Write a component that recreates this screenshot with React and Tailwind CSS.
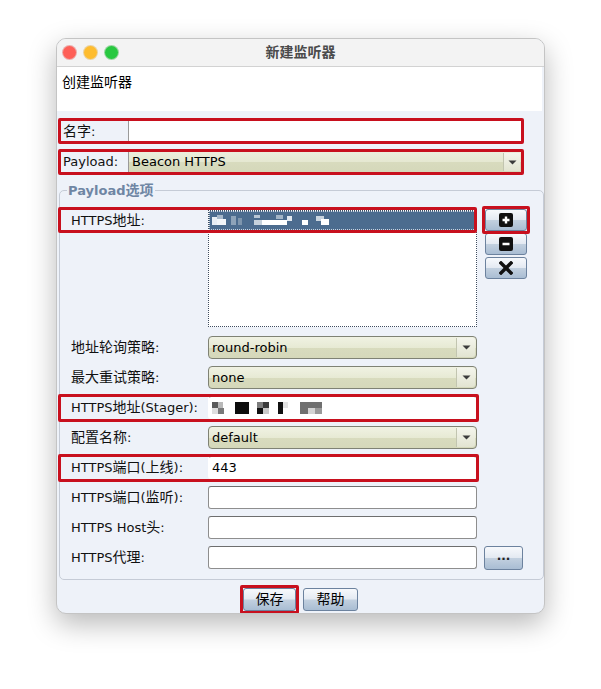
import React from 'react'

const RED = 'border-[#c8101e]'

// CJK glyphs sit a little larger than the Latin ones in the original Swing UI
function T({ children }) {
  const parts = String(children).split(/([\u3400-\u9fff]+)/)
  return (
    <>
      {parts.map((p, i) =>
        /[\u3400-\u9fff]/.test(p) ? <span key={i} className="text-[14px]">{p}</span> : p
      )}
    </>
  )
}

function Red({ className }) {
  return <span className={`pointer-events-none absolute border-[3px] ${RED} rounded-[2px] ${className}`} />
}

function Arrow() {
  return (
    <svg width="9" height="5" viewBox="0 0 9 5">
      <path d="M0.5 0.5 H8.5 L4.5 4.5 Z" fill="#3b3b3b" />
    </svg>
  )
}

function Combo({ value, className = '' }) {
  return (
    <div className={`flex h-full rounded-[4px] border border-[#7f8274] bg-[linear-gradient(#f0f2e3_0%,#e7ead4_50%,#d8dbbe_52%,#d5d8ba_100%)] ${className}`}>
      <span className="flex-1 pl-[3px] leading-[21px] text-black">{value}</span>
      <span className="my-[1px] mr-[1px] flex w-[19px] items-center justify-center rounded-r-[3px] border-l border-[#c2c5b0] bg-[linear-gradient(#f4f5ec,#e2e4d1)]">
        <Arrow />
      </span>
    </div>
  )
}

function Field({ children, className = '' }) {
  return (
    <div className={`flex h-full items-center rounded-[3px] border border-[#8e8e8e] border-t-[#6e6e6e] bg-white pl-[3px] ${className}`}>
      {children}
    </div>
  )
}

function AquaButton({ children, className = '' }) {
  return (
    <div className={`flex items-center justify-center rounded-[3px] border border-[#6c829e] bg-[linear-gradient(#f7f9fc_0%,#e4eaf2_48%,#c2d0df_52%,#a9bdd3_100%)] ${className}`}>
      {children}
    </div>
  )
}

function Row({ label, children, red, extra }) {
  return (
    <div className="relative flex h-[23px] items-center">
      <span className="w-[137px] whitespace-nowrap text-[#111]"><T>{label}</T></span>
      <div className="h-full w-[269px]">{children}</div>
      {extra}
      {red && <Red className="-left-[13px] -top-[2px] -bottom-[3px] w-[421px]" />}
    </div>
  )
}

function PlusIcon() {
  return (
    <svg width="14" height="14" viewBox="0 0 14 14">
      <rect x="0" y="0" width="14" height="14" rx="2" fill="#111" />
      <path d="M7 3.5 V10.5 M3.5 7 H10.5" stroke="#fff" strokeWidth="2.4" />
    </svg>
  )
}

function MinusIcon() {
  return (
    <svg width="14" height="14" viewBox="0 0 14 14">
      <rect x="0" y="0" width="14" height="14" rx="2" fill="#111" />
      <path d="M3.5 7 H10.5" stroke="#fff" strokeWidth="2.4" />
    </svg>
  )
}

function CrossIcon() {
  return (
    <svg width="14" height="14" viewBox="0 0 14 14">
      <path d="M2 2 L12 12 M12 2 L2 12" stroke="#111" strokeWidth="3.4" strokeLinecap="square" />
    </svg>
  )
}

// blurred address in the list
function BlurAddr() {
  return (
    <svg width="125" height="14" viewBox="0 0 125 14">
      <rect x="0" y="3" width="5" height="8" fill="#e9eef4" />
      <rect x="5" y="1" width="6" height="4" fill="#a7b8ca" />
      <rect x="5" y="5" width="9" height="6" fill="#f3f6f9" />
      <rect x="19" y="2" width="5" height="9" fill="#8ea3b9" />
      <rect x="26" y="4" width="4" height="7" fill="#7e95ad" />
      <rect x="42" y="1" width="6" height="3" fill="#b7c5d3" />
      <rect x="42" y="6" width="8" height="5" fill="#c6d1dc" />
      <rect x="50" y="6" width="25" height="5" fill="#ffffff" />
      <rect x="64" y="1" width="7" height="4" fill="#a2b4c6" />
      <rect x="75" y="2" width="5" height="5" fill="#dfe6ee" />
      <rect x="90" y="6" width="6" height="5" fill="#ffffff" />
      <rect x="104" y="2" width="8" height="5" fill="#c9d4df" />
      <rect x="109" y="5" width="8" height="6" fill="#ffffff" />
    </svg>
  )
}

function BlurStager() {
  return (
    <svg width="112" height="16" viewBox="0 0 112 16">
      <rect x="0" y="2" width="6" height="6" fill="#5a5a5a" />
      <rect x="6" y="2" width="5" height="6" fill="#b9b9b9" />
      <rect x="6" y="8" width="6" height="6" fill="#7a7a7a" />
      <rect x="0" y="8" width="6" height="6" fill="#dedede" />
      <rect x="23" y="2" width="14" height="12" fill="#0d0d0d" />
      <rect x="45" y="2" width="6" height="6" fill="#7c7c7c" />
      <rect x="51" y="2" width="6" height="6" fill="#3a3a3a" />
      <rect x="45" y="8" width="6" height="6" fill="#111" />
      <rect x="51" y="8" width="6" height="6" fill="#c9c9c9" />
      <rect x="66" y="2" width="5" height="12" fill="#111" />
      <rect x="71" y="2" width="5" height="6" fill="#e3e3e3" />
      <rect x="88" y="2" width="22" height="6" fill="#6f6f6f" />
      <rect x="88" y="8" width="8" height="6" fill="#6f6f6f" />
      <rect x="96" y="8" width="7" height="6" fill="#d4d4d4" />
      <rect x="103" y="8" width="7" height="6" fill="#9a9a9a" />
    </svg>
  )
}

export default function App() {
  return (
    <div className="min-h-screen bg-white pl-[56px] pt-[38px] font-['DejaVu_Sans','Noto_Sans_CJK_SC',sans-serif] text-[13px]">
      <div className="flex h-[576px] w-[489px] flex-col overflow-hidden rounded-[10px] border border-[#c4c4c4] bg-[#eef2f9] shadow-[0_10px_28px_rgba(0,0,0,0.28)]">
        {/* title bar */}
        <div className="grid h-[28px] shrink-0 grid-cols-[1fr_auto_1fr] items-center border-b border-[#d2d2d2] bg-[#f3f3f3]">
          <div className="flex items-center gap-[8px] pl-[6px]">
            <span className="h-[13px] w-[13px] rounded-full bg-[#fe5f57] ring-1 ring-[#e0443e]/40" />
            <span className="h-[13px] w-[13px] rounded-full bg-[#febc2e] ring-1 ring-[#dea123]/40" />
            <span className="h-[13px] w-[13px] rounded-full bg-[#28c840] ring-1 ring-[#1aab29]/40" />
          </div>
          <span className="text-[14px] font-semibold text-[#4b4b4b]">新建监听器</span>
          <span />
        </div>

        <div className="mr-[2px] h-[44px] shrink-0 bg-white pl-[5px] pt-[5px] text-[14px] leading-[20px] text-black">创建监听器</div>

        {/* name + payload */}
        <div className="ml-[4px] w-[460px] pt-[10px]">
          <div className="relative flex h-[20px]">
            <span className="w-[67px] pl-[2px] leading-[20px] text-[#111]"><T>名字:</T></span>
            <div className="flex-1 border-l border-[#9a9a9a] bg-white" />
            <Red className="-inset-[3px]" />
          </div>
          <div className="relative mt-[11px] flex h-[20px]">
            <span className="w-[67px] pl-[2px] leading-[20px] text-[#111]">Payload:</span>
            <div className="flex flex-1 border-l border-[#9a9a9a] bg-[linear-gradient(#eceedc_0%,#e5e8d1_50%,#d8dbbe_52%,#d5d8ba_100%)]">
              <span className="flex-1 pl-[3px] leading-[19px] text-black">Beacon HTTPS</span>
              <span className="my-[1px] mr-[1px] flex w-[17px] items-center justify-center border-l border-[#c2c5b0] bg-[linear-gradient(#f4f5ec,#e2e4d1)]">
                <Arrow />
              </span>
            </div>
            <Red className="-inset-[3px]" />
          </div>
        </div>

        {/* payload options */}
        <fieldset className="ml-[2px] mt-[9px] w-[485px] rounded-[5px] border border-[#c5cbd6] pb-[10px] pt-[10px]">
          <legend className="ml-[7px] px-[1px] text-[13px] font-bold leading-[18px] text-[#6f86a4]"><T>Payload选项</T></legend>

          <div className="pl-[11px]">
            <div className="flex items-start">
              <div className="relative flex w-[406px]">
                <span className="h-[20px] w-[137px] leading-[20px] text-[#111]"><T>HTTPS地址:</T></span>
                <div className="h-[117px] w-[269px] border border-dotted border-[#3f4d60] bg-white">
                  <div className="flex h-[19px] items-center border border-dotted border-[#c8d3df] bg-[#4c6c8f] pl-[2px]">
                    <BlurAddr />
                  </div>
                </div>
                <Red className="-left-[13px] -top-[3px] right-0 h-[26px]" />
              </div>
              <div className="-mt-[1px] ml-[8px] flex flex-col gap-[2px]">
                <div className="relative">
                  <AquaButton className="h-[22px] w-[42px]"><PlusIcon /></AquaButton>
                  <Red className="-inset-[3px]" />
                </div>
                <AquaButton className="h-[22px] w-[42px]"><MinusIcon /></AquaButton>
                <AquaButton className="h-[22px] w-[42px]"><CrossIcon /></AquaButton>
              </div>
            </div>

            <div className="mt-[9px] flex flex-col gap-[7px]">
              <Row label="地址轮询策略:"><Combo value="round-robin" /></Row>
              <Row label="最大重试策略:"><Combo value="none" /></Row>
              <Row label="HTTPS地址(Stager):" red>
                <Field className="border-transparent"><BlurStager /></Field>
              </Row>
              <Row label="配置名称:"><Combo value="default" /></Row>
              <Row label="HTTPS端口(上线):" red>
                <Field className="border-transparent text-black">443</Field>
              </Row>
              <Row label="HTTPS端口(监听):"><Field /></Row>
              <Row label="HTTPS Host头:"><Field /></Row>
              <Row
                label="HTTPS代理:"
                extra={<AquaButton className="ml-[7px] h-[24px] w-[39px] pb-[4px] text-[12px] font-bold leading-none text-[#222]">...</AquaButton>}
              >
                <Field />
              </Row>
            </div>
          </div>
        </fieldset>

        <div className="mt-[8px] flex justify-center gap-[7px]">
          <div className="relative">
            <AquaButton className="h-[23px] w-[53px] text-[14px] text-black">保存</AquaButton>
            <Red className="-inset-[3px]" />
          </div>
          <AquaButton className="h-[23px] w-[55px] text-[14px] text-black">帮助</AquaButton>
        </div>
      </div>
    </div>
  )
}
